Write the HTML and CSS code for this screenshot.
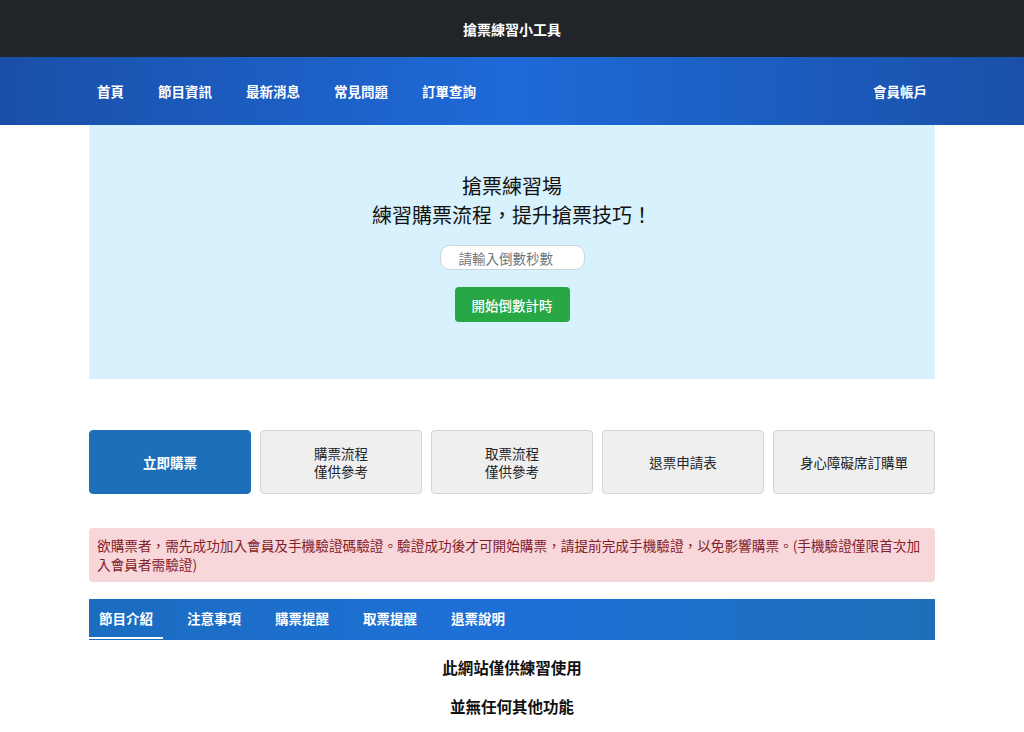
FILE: index.html
```html
<!DOCTYPE html>
<html lang="zh-Hant">
<head>
<meta charset="utf-8">
<title>搶票練習小工具</title>
<link rel="stylesheet" href="styles.css">
</head>
<body>
<header class="topbar">搶票練習小工具</header>
<nav class="mainnav">
  <div class="container navinner">
    <ul class="navlist">
      <li>首頁</li>
      <li>節目資訊</li>
      <li>最新消息</li>
      <li>常見問題</li>
      <li>訂單查詢</li>
    </ul>
    <div class="account">會員帳戶</div>
  </div>
</nav>
<main class="container">
  <section class="hero">
    <h1 class="hero-title">搶票練習場<br>練習購票流程，提升搶票技巧！</h1>
    <input class="count-input" type="text" placeholder="請輸入倒數秒數">
    <button class="btn-start">開始倒數計時</button>
  </section>
  <div class="actions">
    <div class="action primary">立即購票</div>
    <div class="action">購票流程<br>僅供參考</div>
    <div class="action">取票流程<br>僅供參考</div>
    <div class="action">退票申請表</div>
    <div class="action">身心障礙席訂購單</div>
  </div>
  <div class="alert">欲購票者，需先成功加入會員及手機驗證碼驗證。驗證成功後才可開始購票，請提前完成手機驗證，以免影響購票。(手機驗證僅限首次加入會員者需驗證)</div>
  <div class="tabs">
    <div class="tab active">節目介紹</div>
    <div class="tab">注意事項</div>
    <div class="tab">購票提醒</div>
    <div class="tab">取票提醒</div>
    <div class="tab">退票說明</div>
  </div>
  <div class="content">
    <p>此網站僅供練習使用</p>
    <p>並無任何其他功能</p>
  </div>
</main>
</body>
</html>
```
FILE: styles.css
```css
* { box-sizing: border-box; }
body {
  margin: 0;
  font-family: "Noto Sans CJK TC", "Noto Sans", "Liberation Sans", sans-serif;
  color: #212529;
  background: #fff;
}
.container {
  width: 846px;
  margin: 0 auto;
}
.topbar {
  height: 57px;
  background: #212529;
  color: #fff;
  font-size: 14px;
  font-weight: 700;
  display: flex;
  align-items: center;
  justify-content: center;
}
.mainnav {
  height: 68px;
  background: linear-gradient(90deg, #1a4fa8 0%, #1e6ad8 50%, #1a50a8 100%);
  color: #fff;
}
.navinner {
  height: 100%;
  display: flex;
  align-items: center;
  justify-content: space-between;
  padding: 0 8px;
}
.navlist {
  list-style: none;
  margin: 0;
  padding: 0;
  display: flex;
  gap: 34px;
  font-size: 13.5px;
  font-weight: 700;
}
.account {
  font-size: 13.5px;
  font-weight: 700;
}
.hero {
  height: 254px;
  background: #d8f2fd;
  display: flex;
  flex-direction: column;
  align-items: center;
  padding-top: 46px;
}
.hero-title {
  margin: 0;
  font-size: 20px;
  font-weight: 400;
  line-height: 29px;
  text-align: center;
  color: #111;
}
.count-input {
  margin-top: 16px;
  width: 145px;
  height: 25px;
  border: 1px solid #cfd4da;
  border-radius: 10px;
  background: #fff;
  font-family: inherit;
  font-size: 13.5px;
  padding: 0 0 0 18px;
  outline: none;
}
.count-input::placeholder { color: #6c757d; }
.btn-start {
  margin-top: 17px;
  width: 115px;
  height: 35px;
  border: none;
  border-radius: 4px;
  background: #28a745;
  color: #fff;
  font-family: inherit;
  font-size: 13.5px;
  font-weight: 500;
}
.actions {
  margin-top: 51px;
  display: grid;
  grid-template-columns: repeat(5, 1fr);
  gap: 9px;
}
.action {
  height: 64px;
  border: 1px solid #d4d4d4;
  border-radius: 4px;
  background: #efefef;
  display: flex;
  align-items: center;
  justify-content: center;
  text-align: center;
  font-size: 13.5px;
  line-height: 18px;
  color: #212529;
}
.action.primary {
  background: #1d70b7;
  border-color: #1d70b7;
  color: #fff;
  font-weight: 700;
}
.alert {
  margin-top: 34px;
  background: #f8d7da;
  color: #842029;
  border-radius: 4px;
  font-size: 13.65px;
  line-height: 19px;
  padding: 8px 8px 8px 8px;
}
.tabs {
  margin-top: 17px;
  height: 41px;
  display: flex;
  gap: 14px;
  background: linear-gradient(90deg, #1b6dc0 0%, #1e70d9 50%, #1d70b7 100%);
  padding: 0;
}
.tab {
  padding: 0 10px;
  color: #fff;
  font-size: 13.5px;
  font-weight: 700;
  display: flex;
  align-items: center;
  border-bottom: 2px solid transparent;
  height: 40px;
}
.tab.active { border-bottom-color: #fff; }
.content {
  text-align: center;
  font-size: 15.5px;
  font-weight: 700;
  color: #111;
  padding-top: 16px;
}
.content p { margin: 0 0 17px; line-height: 22px; }
```
